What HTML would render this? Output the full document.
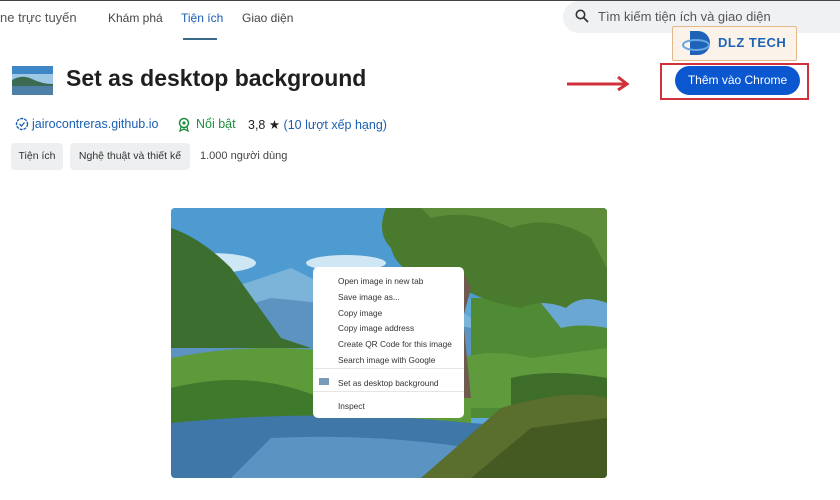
<!DOCTYPE html>
<html><head><meta charset="utf-8"><style>
*{margin:0;padding:0;box-sizing:border-box}
body{width:840px;height:500px;background:#fff;font-family:"Liberation Sans",sans-serif;position:relative;overflow:hidden;color:#1f1f1f}
.a{position:absolute;white-space:nowrap}
.nav{font-size:12px;color:#444}
.chip{position:absolute;background:#eeeff1;border-radius:4px;font-size:10.5px;color:#333;padding:0 8px;height:27px;line-height:27px}
.menu{position:absolute;left:313px;top:267px;width:151px;height:151px;background:#fff;border-radius:5px;font-size:8.3px;color:#333}
.menu div{position:absolute;left:25px}
</style></head><body>
<div style="position:absolute;left:0;top:0;width:840px;height:1px;background:#444"></div>
<div class="a nav" style="left:0;top:10px;font-size:13px;color:#555">ne trực tuyến</div>
<div class="a nav" style="left:108px;top:11px">Khám phá</div>
<div class="a nav" style="left:181px;top:11px;color:#1a5fb4">Tiện ích</div>
<div class="a nav" style="left:242px;top:11px">Giao diện</div>
<div class="a" style="left:183px;top:38px;width:34px;height:2px;background:#3a6a8a"></div>
<div class="a" style="left:563px;top:1px;width:277px;height:32px;background:#f0f1f3;border-radius:16px 0 0 16px"></div>
<svg class="a" style="left:575px;top:9px" width="14" height="14" viewBox="0 0 14 14"><circle cx="5.5" cy="5.5" r="4.2" fill="none" stroke="#333" stroke-width="1.6"/><path d="M8.5 8.5L13 13" stroke="#333" stroke-width="1.8"/></svg>
<div class="a" style="left:598px;top:9px;font-size:13px;color:#555">Tìm kiếm tiện ích và giao diện</div>
<div class="a" style="left:672px;top:26px;width:125px;height:35px;background:#fbf3ea;border:1px solid #e3b98a;border-radius:2px"></div>
<svg class="a" style="left:682px;top:28px" width="36" height="32" viewBox="0 0 36 32"><path d="M8 3h8a12 12 0 0 1 0 24H8z" fill="#1e63b8"/><ellipse cx="14" cy="17" rx="13" ry="5" fill="none" stroke="#6aa6e0" stroke-width="2"/></svg>
<div class="a" style="left:718px;top:35px;font-size:13px;font-weight:bold;color:#1e63b8;letter-spacing:.5px">DLZ TECH</div>
<div class="a" style="left:660px;top:63px;width:149px;height:37px;border:2.5px solid #d0313b"></div>
<div class="a" style="left:675px;top:66px;width:125px;height:29px;background:#0b57d0;border-radius:15px;color:#fff;font-size:12px;line-height:29px;text-align:center">Thêm vào Chrome</div>
<svg class="a" style="left:566px;top:75px" width="66" height="16" viewBox="0 0 66 16"><path d="M1 9H60" stroke="#d0313b" stroke-width="3"/><path d="M52 2L61 9L52 15" fill="none" stroke="#d0313b" stroke-width="3"/></svg>
<svg class="a" style="left:12px;top:66px" width="41" height="29" viewBox="0 0 41 29"><rect width="41" height="29" fill="#9cc7e6"/><rect y="0" width="41" height="8" fill="#3f86c7"/><path d="M0 14Q10 8 20 13T41 18V29H0z" fill="#3c6b52"/><path d="M0 20H41V29H0z" fill="#4e7fa6"/></svg>
<div class="a" style="left:66px;top:65px;font-size:23px;font-weight:bold;color:#1f1f1f">Set as desktop background</div>
<svg class="a" style="left:15px;top:117px" width="14" height="14" viewBox="0 0 14 14"><circle cx="7" cy="7" r="5.5" fill="none" stroke="#1a5fb4" stroke-width="1.4" stroke-dasharray="3 1"/><path d="M4.5 7l2 2 3-3.5" fill="none" stroke="#1a5fb4" stroke-width="1.3"/></svg>
<div class="a" style="left:32px;top:117px;font-size:12.5px;color:#1a5fb4">jairocontreras.github.io</div>
<svg class="a" style="left:177px;top:117px" width="14" height="15" viewBox="0 0 14 15"><circle cx="7" cy="6" r="4.5" fill="none" stroke="#1e8e3e" stroke-width="1.5"/><circle cx="7" cy="6" r="1.6" fill="#1e8e3e"/><path d="M4 10l-1 4 4-2 4 2-1-4" fill="none" stroke="#1e8e3e" stroke-width="1.3"/></svg>
<div class="a" style="left:196px;top:117px;font-size:12.5px;color:#1e8e3e">Nổi bật</div>
<div class="a" style="left:248px;top:117px;font-size:12.5px;color:#1f1f1f">3,8 ★ <span style="color:#1a5fb4">(10 lượt xếp hạng)</span></div>
<div class="chip" style="left:11px;top:143px;width:52px;text-align:center;padding:0">Tiện ích</div>
<div class="chip" style="left:70px;top:143px;width:120px;text-align:center;padding:0">Nghệ thuật và thiết kế</div>
<div class="a" style="left:200px;top:150px;font-size:11px;color:#444">1.000 người dùng</div>
<svg class="a" style="left:171px;top:208px;border-radius:4px" width="436" height="270" viewBox="0 0 436 270">
<rect width="436" height="270" fill="#5ea7d6"/>
<rect width="436" height="90" fill="#4d9bd0"/>
<ellipse cx="40" cy="55" rx="45" ry="10" fill="#cfe6f5"/><ellipse cx="175" cy="55" rx="40" ry="8" fill="#cfe6f5"/>
<path d="M0 100L60 80L120 60L170 85L240 70L300 110V150H0z" fill="#7cb3d8"/>
<path d="M0 120L100 90L200 100L300 120V160H0z" fill="#5d93c0"/>
<path d="M0 20Q30 30 60 60L110 130L140 140H0z" fill="#3b6e2f"/>
<path d="M0 150Q100 130 200 150L300 160V230H0z" fill="#5d9a3a"/>
<path d="M0 180Q80 160 150 190L220 200V240H0z" fill="#3f7a2c"/>
<path d="M0 215Q150 200 300 215L436 225V270H0z" fill="#3f78a8"/>
<path d="M100 230Q200 225 300 240V270H60z" fill="#5b93c2"/>
<path d="M300 90H436V210H300z" fill="#4f8a35"/>
<path d="M370 95Q400 80 436 90V120Q410 115 390 120z" fill="#6aa7d3"/>
<path d="M215 0H436V95Q410 85 395 100Q370 90 350 100Q320 95 300 85Q270 90 250 70Q225 60 220 40Q205 25 215 0z" fill="#4a7a2e"/>
<path d="M260 10Q300 0 340 20Q380 5 420 30L436 60V0H250z" fill="#5e8d3a"/>
<path d="M290 150Q320 140 360 150L436 140V200H290z" fill="#5f9a3d"/>
<path d="M340 170Q380 160 436 170V230H340z" fill="#3e6d2a"/>
<path d="M290 60L300 80L292 110L300 190H285L282 110L270 80z" fill="#6e5a4e"/>
<path d="M250 270L330 200Q400 180 436 190V270z" fill="#5a6e2e"/>
<path d="M300 270L360 220L436 210V270z" fill="#445a22"/>
</svg>
<div class="menu">
<div style="top:9px">Open image in new tab</div>
<div style="top:25px">Save image as...</div>
<div style="top:41px">Copy image</div>
<div style="top:56px">Copy image address</div>
<div style="top:72px">Create QR Code for this image</div>
<div style="top:88px">Search image with Google</div>
<div style="top:101px;left:0;width:151px;height:1px;background:#e5e5e5"></div>
<div style="top:111px;left:6px;width:10px;height:7px;background:#7a9bb8"></div>
<div style="top:111px">Set as desktop background</div>
<div style="top:124px;left:0;width:151px;height:1px;background:#e5e5e5"></div>
<div style="top:134px">Inspect</div>
</div>
</body></html>
